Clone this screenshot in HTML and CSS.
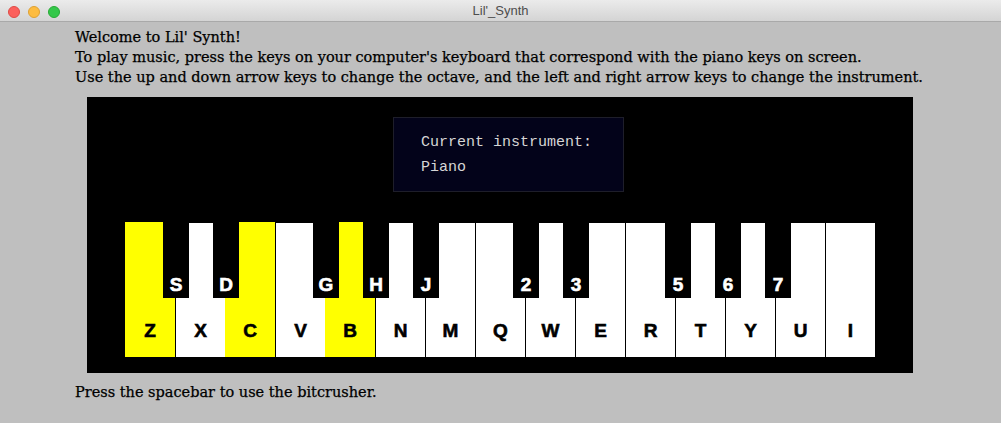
FILE: index.html
```html
<!DOCTYPE html>
<html>
<head>
<meta charset="utf-8">
<title>Lil'_Synth</title>
<link rel="stylesheet" href="styles.css">
</head>
<body>
<div class="window">
  <div class="titlebar">
    <div class="lights">
      <span class="light red"></span>
      <span class="light yellow"></span>
      <span class="light green"></span>
    </div>
    <div class="title">Lil'_Synth</div>
  </div>
  <div class="content">
    <div class="intro">
      <div>Welcome to Lil' Synth!</div>
      <div>To play music, press the keys on your computer's keyboard that correspond with the piano keys on screen.</div>
      <div>Use the up and down arrow keys to change the octave, and the left and right arrow keys to change the instrument.</div>
    </div>
    <div class="panel">
      <div class="instrument">
        <div>Current instrument:</div>
        <div>Piano</div>
      </div>
      <div class="keyboard">
        <div class="key lit">Z</div>
        <div class="key white">X</div>
        <div class="key lit">C</div>
        <div class="key white">V</div>
        <div class="key lit">B</div>
        <div class="key white">N</div>
        <div class="key white">M</div>
        <div class="key white">Q</div>
        <div class="key white">W</div>
        <div class="key white">E</div>
        <div class="key white">R</div>
        <div class="key white">T</div>
        <div class="key white">Y</div>
        <div class="key white">U</div>
        <div class="key white">I</div>
        <div class="black" style="left:38px">S</div>
        <div class="black" style="left:88px">D</div>
        <div class="black" style="left:188px">G</div>
        <div class="black" style="left:238px">H</div>
        <div class="black" style="left:288px">J</div>
        <div class="black" style="left:388px">2</div>
        <div class="black" style="left:438px">3</div>
        <div class="black" style="left:540px">5</div>
        <div class="black" style="left:590px">6</div>
        <div class="black" style="left:640px">7</div>
      </div>
    </div>
    <div class="footer">Press the spacebar to use the bitcrusher.</div>
  </div>
</div>
</body>
</html>
```

FILE: styles.css
```css
html, body {
  margin: 0;
  padding: 0;
  background: #bfbfbf;
}

.window {
  width: 1001px;
  height: 423px;
  background: #bfbfbf;
  overflow: hidden;
}

.titlebar {
  height: 21px;
  border-bottom: 1px solid #a9a9a9;
  background: linear-gradient(#ebebeb, #d4d4d4);
  display: flex;
  align-items: center;
  position: relative;
}

.lights {
  display: flex;
  gap: 8px;
  padding-left: 8px;
  padding-top: 2px;
}

.light {
  width: 12px;
  height: 12px;
  border-radius: 50%;
  box-sizing: border-box;
}

.red { background: #fc605c; border: 1px solid #de4b45; }
.yellow { background: #fdbc40; border: 1px solid #dea133; }
.green { background: #34c84a; border: 1px solid #27aa35; }

.title {
  position: absolute;
  left: 0;
  right: 0;
  top: 3px;
  text-align: center;
  font-family: "Liberation Sans", Arial, sans-serif;
  font-size: 13px;
  color: #4d4d4d;
}

.content {
  padding-left: 75px;
}

.intro {
  margin-top: 5px;
  font-family: "DejaVu Serif", serif;
  font-size: 14.5px;
  line-height: 20px;
  color: #000;
  -webkit-text-stroke: 0.25px #000;
  white-space: nowrap;
}

.footer {
  margin-top: 9px;
  font-family: "DejaVu Serif", serif;
  font-size: 14.5px;
  line-height: 20px;
  color: #000;
  -webkit-text-stroke: 0.25px #000;
}

.panel {
  margin-top: 10px;
  margin-left: 12px;
  width: 826px;
  height: 276px;
  background: #000;
  box-sizing: border-box;
  padding-top: 20px;
}

.instrument {
  margin-left: 306px;
  width: 231px;
  height: 75px;
  box-sizing: border-box;
  background: #03031a;
  border: 1px solid #1e1e2a;
  padding: 12px 0 0 27px;
  font-family: "Liberation Mono", "Courier New", monospace;
  font-size: 15px;
  line-height: 25px;
  color: #d6d6d6;
}

.keyboard {
  position: relative;
  margin-top: 30px;
  margin-left: 38px;
  display: flex;
  height: 135px;
}

.key {
  width: 50px;
  height: 135px;
  box-sizing: border-box;
  display: flex;
  align-items: flex-end;
  justify-content: center;
  padding-bottom: 16px;
  font-family: "Liberation Sans", Arial, sans-serif;
  font-weight: bold;
  font-size: 19px;
  line-height: 20px;
  color: #000;
  -webkit-text-stroke: 0.6px currentColor;
}

.key.white {
  background: #fff;
  border-left: 1px solid #000;
  border-top: 1px solid #000;
}

.key.lit {
  background: #ffff00;
}

.black {
  position: absolute;
  top: 0;
  width: 26px;
  height: 76px;
  background: #000;
  box-sizing: border-box;
  display: flex;
  align-items: flex-end;
  justify-content: center;
  padding-bottom: 3px;
  font-family: "Liberation Sans", Arial, sans-serif;
  font-weight: bold;
  font-size: 19px;
  line-height: 20px;
  color: #fff;
  -webkit-text-stroke: 0.6px currentColor;
}
```
